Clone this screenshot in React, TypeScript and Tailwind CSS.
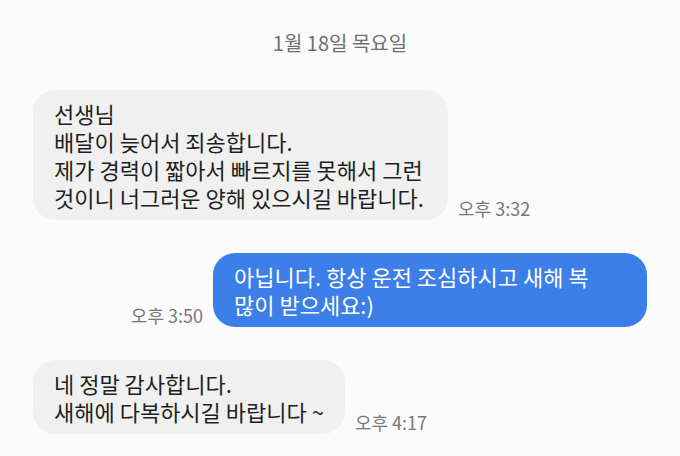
import React from 'react';

type Msg = { id: number; mine: boolean; lines: string[]; time: string; width?: string };

const messages: Msg[] = [
  {
    id: 1,
    mine: false,
    lines: ['선생님', '배달이 늦어서 죄송합니다.', '제가 경력이 짧아서 빠르지를 못해서 그런', '것이니 너그러운 양해 있으시길 바랍니다.'],
    time: '오후 3:32',
    width: 'w-[415px]',
  },
  {
    id: 2,
    mine: true,
    lines: ['아닙니다. 항상 운전 조심하시고 새해 복', '많이 받으세요:)'],
    time: '오후 3:50',
    width: 'w-[434px]',
  },
  { id: 3, mine: false, lines: ['네 정말 감사합니다.', '새해에 다복하시길 바랍니다 ~'], time: '오후 4:17' },
];

function Bubble({ msg }: { msg: Msg }) {
  const time = <span className="mb-[1px] shrink-0 text-[18px] leading-[22px] text-[#777]">{msg.time}</span>;
  return (
    <div className={`flex items-end gap-[10px] ${msg.mine ? 'justify-end' : 'justify-start'}`}>
      {msg.mine && time}
      <div
        className={`${msg.width ?? ''} rounded-[22px] px-[21px] py-[9px] text-[22px] leading-[28px] ${
          msg.mine ? 'bg-[#3d7fe9] text-white' : 'bg-[#f0f0f0] text-[#1e1e1e]'
        }`}
      >
        {msg.lines.map((l, i) => (
          <div key={i} className="whitespace-nowrap">{l}</div>
        ))}
      </div>
      {!msg.mine && time}
    </div>
  );
}

export default function App() {
  return (
    <div
      className="h-[456px] w-[680px] overflow-hidden bg-[#fbfbfb] px-[33px]"
      style={{ fontFamily: '"Noto Sans CJK KR", "Noto Sans", sans-serif' }}
    >
      <div className="pt-[31px] text-center text-[20px] leading-[24px] text-[#707070]">1월 18일 목요일</div>
      <div className="mt-[35px] flex flex-col gap-[33px]">
        {messages.map(m => (
          <Bubble key={m.id} msg={m} />
        ))}
      </div>
    </div>
  );
}
